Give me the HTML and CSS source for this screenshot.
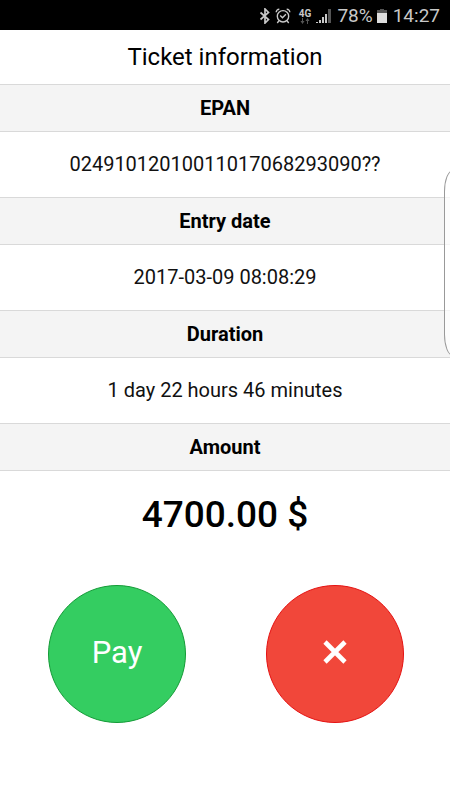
FILE: index.html
```html
<!DOCTYPE html>
<html lang="en">
<head>
<meta charset="utf-8">
<meta name="viewport" content="width=device-width, initial-scale=1">
<title>Ticket information</title>
<link rel="stylesheet" href="styles.css">
</head>
<body>
<div class="status">
  <svg class="bluetooth" width="12" height="16" viewBox="0 0 12 16" aria-hidden="true"><path d="M1.500 4.500l8 7L6 15V1l3.500 3.500-8 7" fill="none" stroke="currentColor" stroke-width="1.700"/></svg>
  <svg class="alarm" width="16" height="16" viewBox="0 0 16 16" fill="none" stroke="currentColor" stroke-width="1.400" aria-hidden="true"><circle cx="8" cy="8.300" r="5.700"/><path d="M1.200 4.300C1.200 2.500 2.300 1.300 4.300 1.300M14.800 4.300c0-1.800-1.100-3-3.100-3M4 12.700l-1.700 2.300M12 12.700l1.700 2.300M5.200 7.500l2.300 2.200 3.400-3.500"/></svg>
  <div class="network">
    <span>4G</span>
    <svg width="10" height="6" viewBox="0 0 10 6" fill="#555" aria-hidden="true"><path d="M2 0h1v3h1.500L2.500 6 .500 3H2zM7 6h1V3h1.500L7.500 0l-2 3H7z"/></svg>
  </div>
  <svg class="signal" width="16" height="16" viewBox="0 0 16 16" fill="currentColor" aria-hidden="true"><path d="M0 14h2v1H0zM3 12h2v3H3zM6 9h2v6H6zM9 6h2v9H9z"/><path fill="#555" d="M12 1h3v14h-3z"/></svg>
  <span>78%</span>
  <svg class="battery" width="10" height="16" viewBox="0 0 10 16" aria-hidden="true"><path fill="#555" d="M3 1h4v1h3v4H0V2h3z"/><path fill="#ddd" d="M0 5h10v10H0z"/></svg>
  <span>14:27</span>
</div>
<main>
  <h1>Ticket information</h1>
  <dl>
    <dt>EPAN</dt>
    <dd>02491012010011017068293090??</dd>
    <dt>Entry date</dt>
    <dd>2017-03-09 08:08:29</dd>
    <dt>Duration</dt>
    <dd>1 day 22 hours 46 minutes</dd>
    <dt>Amount</dt>
    <dd class="amount">4700.00 $</dd>
  </dl>
  <div class="actions">
    <button class="pay" type="button">Pay</button>
    <button class="cancel" type="button" aria-label="Cancel">
      <svg width="24" height="24" viewBox="0 0 24 24" aria-hidden="true"><path d="M2 2l20 20M22 2L2 22" stroke="currentColor" stroke-width="4.600"/></svg>
    </button>
  </div>
</main>
<div class="edge-handle"></div>
</body>
</html>
```
FILE: styles.css
```css
* {
  box-sizing: border-box;
}

body {
  margin: 0;
  min-height: 100vh;
  background: #fff;
  color: #111;
  font-family: Roboto, "Liberation Sans", sans-serif;
  font-size: 20px;
  line-height: 24px;
  text-align: center;
  overflow-x: hidden;
}

.status {
  display: flex;
  align-items: center;
  justify-content: flex-end;
  height: 30px;
  padding: 2px 10px 0 0;
  background: #000;
  color: #c8c8c8;
  font-size: 19px;
}

.alarm {
  margin: 0 8px 0 4px;
}

.network {
  display: flex;
  flex-direction: column;
  align-items: center;
  margin-right: 5px;
  font-size: 10px;
  font-weight: 700;
  line-height: 9px;
}

.signal {
  margin-right: 5px;
}

.battery {
  margin: 0 6px 0 4px;
}

h1 {
  margin: 0;
  padding: 12px 0;
  color: #000;
  font-size: 24px;
  font-weight: 400;
  line-height: 30px;
}

dl,
dd {
  margin: 0;
}

dt {
  padding: 12px 0 11px;
  border: solid #d9d9d9;
  border-width: 1px 0;
  background: #f4f4f4;
  color: #000;
  font-weight: 700;
  line-height: 23px;
}

dd {
  padding: 20px 0 21px;
  line-height: 24px;
}

dd.amount {
  padding: 20px 0;
  color: #000;
  font-size: 37px;
  font-weight: 500;
  line-height: 48px;
}

.actions {
  display: grid;
  grid-template-columns: 1fr 1fr;
  justify-items: center;
  padding: 26px 6px 26px 8px;
}

button {
  display: flex;
  align-items: center;
  justify-content: center;
  width: 138px;
  height: 138px;
  padding: 0 0 4px;
  border: 1px solid;
  border-radius: 50%;
  color: #fff;
  font-family: inherit;
  font-size: 31px;
}

.pay {
  border-color: #149b37;
  background: #34cd61;
}

.cancel {
  border-color: #e51212;
  background: #f1473a;
}

.edge-handle {
  position: absolute;
  top: 170px;
  right: -12px;
  width: 18px;
  height: 186px;
  border: 1px solid #999;
  border-radius: 10px / 24px;
  background: rgba(255, 255, 255, 0.7);
}
```
